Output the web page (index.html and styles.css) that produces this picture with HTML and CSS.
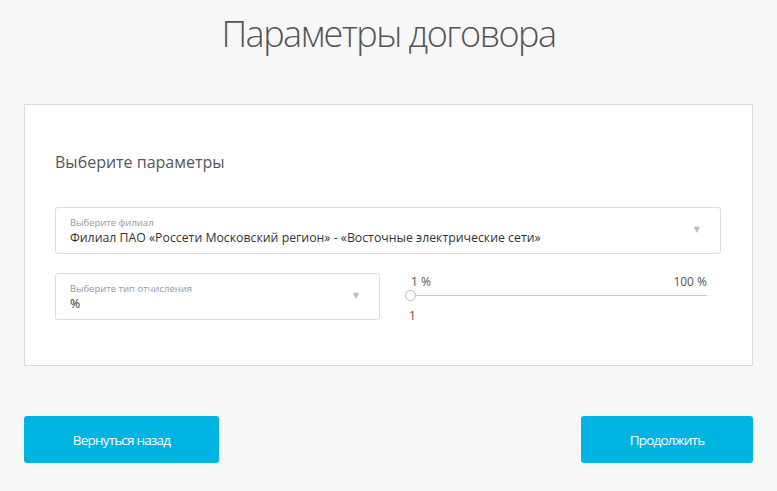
FILE: index.html
```html
<!DOCTYPE html>
<html lang="ru">
<head>
<meta charset="utf-8">
<title>Параметры договора</title>
<link rel="stylesheet" href="styles.css">
</head>
<body>
<div class="page">
  <h1 class="title">Параметры договора</h1>
  <section class="card">
    <h2 class="card-title">Выберите параметры</h2>
    <div class="select wide">
      <div class="select-text">
        <span class="select-label">Выберите филиал</span>
        <span class="select-value">Филиал ПАО «Россети Московский регион» - «Восточные электрические сети»</span>
      </div>
      <span class="select-arrow">▼</span>
    </div>
    <div class="row">
      <div class="select">
        <div class="select-text">
          <span class="select-label">Выберите тип отчисления</span>
          <span class="select-value">%</span>
        </div>
        <span class="select-arrow">▼</span>
      </div>
      <div class="slider">
        <div class="slider-limits"><span>1 %</span><span>100 %</span></div>
        <div class="slider-track"><span class="slider-thumb"></span></div>
        <div class="slider-value">1</div>
      </div>
    </div>
  </section>
  <div class="actions">
    <button class="btn btn-back">Вернуться назад</button>
    <button class="btn btn-next">Продолжить</button>
  </div>
</div>
</body>
</html>
```
FILE: styles.css
```css
html, body {
  margin: 0;
  padding: 0;
  background: #f7f7f7;
}
body {
  font-family: "Open Sans", "DejaVu Sans", sans-serif;
  color: #555;
}
.page {
  padding: 0 24px;
}
.title {
  margin: 0;
  padding-top: 11px;
  height: 104px;
  box-sizing: border-box;
  text-align: center;
  font-weight: 300;
  font-size: 36px;
  font-stretch: 91%;
  letter-spacing: -1.5px;
  line-height: 46px;
  color: #555;
}
.card {
  background: #fff;
  border: 1px solid #dcdcdc;
  height: 262px;
  box-sizing: border-box;
  padding: 44px 31px 0 30px;
}
.card-title {
  margin: 0 0 32px;
  font-size: 16px;
  font-weight: 400;
  line-height: 26px;
  color: #555;
}
.select {
  display: flex;
  align-items: center;
  border: 1px solid #ddd;
  border-radius: 3px;
  height: 47px;
  box-sizing: border-box;
  padding: 0 20px 0 14px;
  background: #fff;
}
.select-text {
  flex: 1;
  display: flex;
  flex-direction: column;
  padding-top: 1px;
}
.select-label {
  font-size: 9.5px;
  line-height: 13px;
  color: #999;
}
.select-value {
  font-size: 12.3px;
  line-height: 18px;
  color: #333;
}
.select-arrow {
  font-size: 8px;
  color: #bbb;
  margin-top: -4px;
}
.row {
  display: grid;
  grid-template-columns: 325px 1fr;
  column-gap: 30px;
  margin-top: 19px;
}
.slider {
  padding-right: 14px;
  font-size: 12px;
  color: #555;
}
.slider-limits {
  display: flex;
  justify-content: space-between;
  line-height: 16px;
  margin-top: 1px;
  padding-left: 1px;
}
.slider-track {
  position: relative;
  height: 1px;
  background: #ccc;
  margin: 5px 0 12px;
}
.slider-thumb {
  position: absolute;
  left: -5px;
  top: -5px;
  width: 9px;
  height: 9px;
  border: 1px solid #bbb;
  border-radius: 50%;
  background: #fff;
}
.slider-value {
  line-height: 16px;
  margin-left: -1px;
}
.actions {
  display: flex;
  justify-content: space-between;
  margin-top: 50px;
}
.btn {
  height: 47px;
  border: none;
  border-radius: 3px;
  background: #00b4e1;
  color: #fff;
  font-family: "Open Sans", sans-serif;
  font-size: 13.5px;
  font-stretch: 91%;
  letter-spacing: -0.8px;
  cursor: pointer;
}
.btn-back {
  width: 195px;
}
.btn-next {
  width: 172px;
}
```
